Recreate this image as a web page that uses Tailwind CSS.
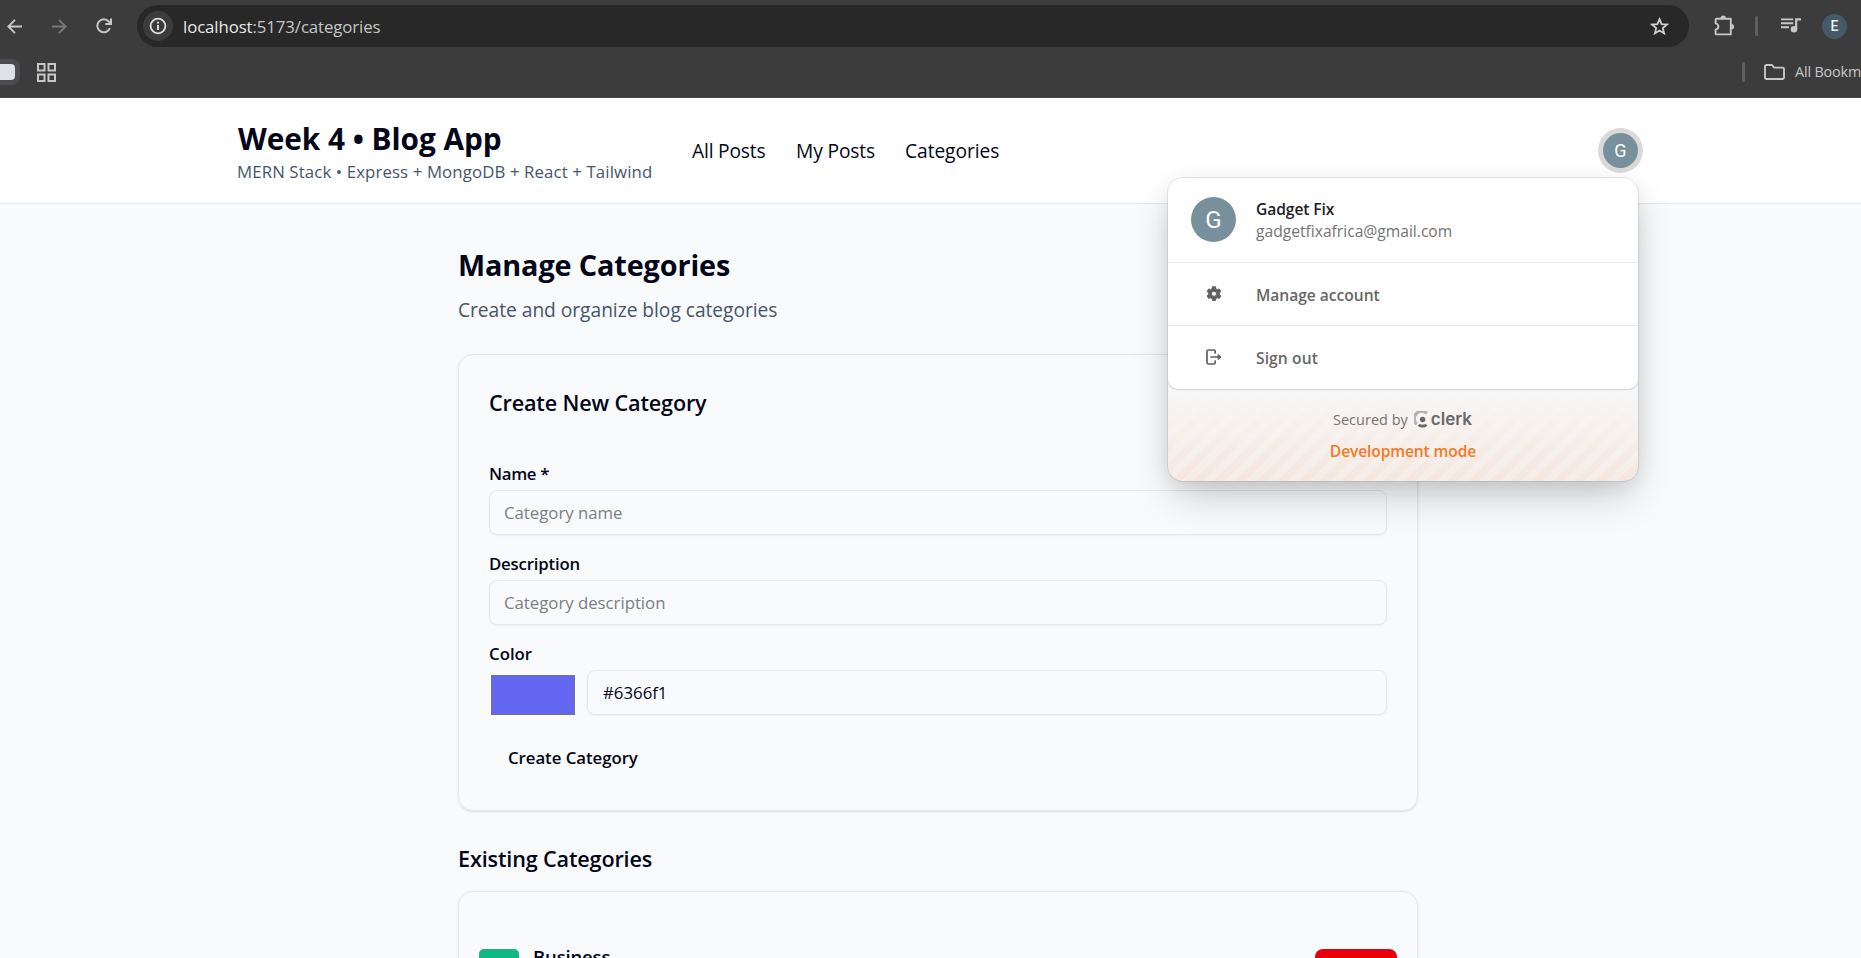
<!DOCTYPE html>
<html lang="en">
<head>
<meta charset="utf-8">
<title>Week 4 • Blog App</title>
<script src="https://cdn.jsdelivr.net/npm/@tailwindcss/browser@4"></script>
</head>
<body class="h-[958px] w-[1861px] overflow-hidden bg-slate-50 font-['Open_Sans','Noto_Sans',sans-serif] text-[#020618]">

<!-- Browser chrome -->
<div class="h-[98px] w-full overflow-hidden border-b border-[#4a4a4a] bg-[#3c3c3c] text-[#c7c7c7]">
  <div class="flex h-[52px] items-center">
    <svg class="ml-[7px] size-[15px] shrink-0" viewBox="0 0 15 15" fill="none" stroke="#c7c7c7" stroke-width="1.9"><path d="M15 7.5H1.5M8 .8 1.3 7.5 8 14.2"/></svg>
    <svg class="ml-[30px] size-[15px] shrink-0" viewBox="0 0 15 15" fill="none" stroke="#7a7a7a" stroke-width="1.9"><path d="M0 7.5h13.5M7 .8l6.7 6.7L7 14.2"/></svg>
    <svg class="ml-[29px] size-4 shrink-0" viewBox="0 0 16 16" fill="none" stroke="#c7c7c7" stroke-width="2"><path d="M13.9 10.2A6.5 6.5 0 1 1 12.8 3.6L14.6 5.6"/><path d="M15 .6v5.5H9.3"/></svg>
    <div class="ml-[25px] flex h-[42px] w-[1552px] shrink-0 items-center rounded-full bg-[#282828] pl-[6px]">
      <div class="flex size-[30px] items-center justify-center rounded-full bg-[#3c3c3c]">
        <svg class="size-[18px]" viewBox="0 0 18 18" fill="none" stroke="#dedede"><circle cx="9" cy="9" r="7.4" stroke-width="1.8"/><path d="M9 8v5" stroke-width="1.9"/><path d="M9 4.7v1.9" stroke-width="1.9"/></svg>
      </div>
      <span class="ml-[10px] text-[16.8px] leading-[25px] tracking-[-0.09px] text-[#c4c7c5]"><span class="text-[#e8e8e8]">localhost</span>:5173/categories</span>
      <svg class="mr-5 ml-auto size-[19px]" viewBox="0 0 19 19" fill="none" stroke="#d0d0d0" stroke-width="1.8"><path d="M9.5 2.2l2.1 5 5.3.4-4.1 3.5 1.3 5.3-4.6-2.9-4.6 2.9 1.3-5.3L2.1 7.6l5.3-.4z"/></svg>
    </div>
    <svg class="mb-[2px] ml-6 h-[21px] w-[22px] shrink-0" viewBox="0 0 22 21" fill="none" stroke="#c7c7c7" stroke-width="1.9"><path d="M3.6 3.700h14.200v15.700H3.600q-1 0-1-1v-3.600q2.800-.6 2.800-3.200T2.600 8.300V4.700q0-1 1-1z" stroke-linejoin="round"/><path d="M7.500 3.200a2.700 2.700 0 0 1 5.400 0zM18.400 9a2.700 2.700 0 0 1 0 5.400z" fill="#c7c7c7" stroke="none"/></svg>
    <div class="ml-[20px] h-5 w-[3px] shrink-0 rounded bg-[#5f5f5f]"></div>
    <svg class="mb-px ml-[23px] h-[15px] w-5 shrink-0" viewBox="0 0 20 15" fill="none" stroke="#c7c7c7" stroke-width="1.9"><path d="M0 1.400h12.300M0 5.300h12.300M0 9.200h8"/><path d="M15.200 11V1.400h4.800" stroke-width="2.200"/><circle cx="13" cy="11.300" r="3.300" fill="#c7c7c7" stroke="none"/></svg>
    <div class="ml-[21px] flex size-[25px] shrink-0 items-center justify-center rounded-full bg-[#455a66] font-[Roboto] text-[14px] leading-none font-medium text-[#eceff1]">E</div>
  </div>
  <div class="flex h-10 items-center">
    <div class="flex h-[26px] w-5 shrink-0 items-center rounded-r-lg bg-[#4b4c50]"><div class="h-4 w-[15px] rounded-r-[4px] bg-[#dfe1e6]"></div></div>
    <svg class="ml-[17px] size-[19px] shrink-0" viewBox="0 0 19 19" fill="none" stroke="#c7c7c7" stroke-width="2"><path d="M1 1h6.500v6.500H1zM11.500 1H18v6.500h-6.500zM1 11.500h6.500V18H1zM11.500 11.500H18V18h-6.500z"/></svg>
    <div class="ml-[1686px] h-5 w-[3px] shrink-0 rounded bg-[#5f5f5f]"></div>
    <svg class="ml-[19px] h-4 w-[21px] shrink-0" viewBox="0 0 21 16" fill="none" stroke="#c7c7c7" stroke-width="1.900" stroke-linejoin="round"><path d="M1 13.500V2.500Q1 1 2.500 1H8l2.200 2.600h8.300q1.500 0 1.500 1.500v8.400q0 1.500-1.500 1.500h-16Q1 15 1 13.500z"/></svg>
    <span class="ml-[10px] shrink-0 text-[14.4px] whitespace-nowrap tracking-[-0.16px]">All Bookmarks</span>
  </div>
</div>

<!-- Site header -->
<header class="h-[106px] border-b border-slate-200 bg-white">
  <div class="relative ml-[238px] flex h-[105px] w-[1400px] items-center">
    <div class="pt-px">
      <h1 class="h-10 text-[29.8px] leading-10 font-bold tracking-[-0.05px]">Week 4 • Blog App</h1>
      <p class="-ml-px text-[16.8px] leading-[25px] tracking-[0.12px] text-[#45556c]">MERN Stack • Express + MongoDB + React + Tailwind</p>
    </div>
    <nav class="absolute left-[454px] flex text-[19.2px] leading-[30px] whitespace-nowrap">
      <a class="w-[104px] tracking-[-0.17px]">All Posts</a>
      <a class="w-[109px] tracking-[-0.13px]">My Posts</a>
      <a class="tracking-[-0.06px]">Categories</a>
    </nav>
    <button class="absolute top-[30px] right-[-5px] flex size-[45px] items-center justify-center rounded-full bg-[#d9d9d9]">
      <span class="flex size-[35px] items-center justify-center rounded-full bg-[#78909c] font-[Roboto] text-[18px] leading-none text-white">G</span>
    </button>

    <!-- Account menu -->
    <div class="absolute top-[80px] right-0 z-10 h-[303px] w-[470px] overflow-hidden rounded-[15px] bg-[#f7f7f7] shadow-[0_0_0_1px_rgba(0,0,0,0.08),0_19px_44px_-6px_rgba(0,0,0,0.2),0_6px_19px_0_rgba(0,0,0,0.08)]">
      <div class="relative z-10 h-[211px] rounded-b-[10px] bg-white shadow-[0_0_0_1px_rgba(0,0,0,0.06),0_1px_2px_0_rgba(0,0,0,0.1)]">
        <div class="flex h-[85px] items-start border-b border-[#ebebeb] pt-[19px] pl-[23px]">
          <div class="flex size-[45px] items-center justify-center rounded-full bg-[#78909c] font-[Roboto] text-[24px] leading-none text-white">G</div>
          <div class="ml-5 pt-[1px] text-[15.6px] leading-[22px]">
            <p class="font-semibold tracking-[-0.08px] text-[#212126]">Gadget Fix</p>
            <p class="tracking-[0.01px] text-[#747474]">gadgetfixafrica@gmail.com</p>
          </div>
        </div>
        <div class="flex h-[63px] items-center border-b border-[#ebebeb] text-[15.6px] font-semibold tracking-[-0.03px] text-[#676767]">
          <svg class="ml-[38px] size-4" viewBox="0 0 16 16" fill="#606060"><path fill-rule="evenodd" d="M6.600.5h2.800l.4 2 1.300.75 1.950-.65 1.400 2.400-1.500 1.400v1.300l1.500 1.400-1.400 2.400-1.950-.65-1.300.75-.4 2H6.600l-.4-2-1.300-.75-1.950.65-1.400-2.400 1.500-1.400V6.400L1.550 5l1.400-2.400 1.950.65L6.200 2.500zM8 4.700a2.400 2.400 0 1 0 0 4.800 2.400 2.400 0 0 0 0-4.800z" transform="translate(-.5 .2) scale(1.060)" stroke="#606060" stroke-width=".9" stroke-linejoin="round"/></svg>
          <span class="ml-[34px] pt-[3px]">Manage account</span>
        </div>
        <div class="flex h-[63px] items-center text-[15.6px] font-semibold tracking-[0.1px] text-[#676767]">
          <svg class="mb-[2px] ml-[38px] size-4" viewBox="0 0 16 16" fill="none" stroke="#606060" stroke-width="1.700" stroke-linecap="round" stroke-linejoin="round"><path d="M9.200 4V2.600Q9.200 1 7.600 1H2.600Q1 1 1 2.600v10.800Q1 15 2.600 15h5q1.600 0 1.600-1.600V12"/><path d="M5 8h9"/><path d="M12.300 5.700 15 8l-2.700 2.300z" fill="#606060" stroke-width="1"/></svg>
          <span class="ml-[34px] pt-[2px]">Sign out</span>
        </div>
      </div>
      <div class="relative flex h-[92px] flex-col items-center pt-[18px]">
        <div class="absolute inset-0 bg-[repeating-linear-gradient(-45deg,rgba(243,107,22,0.07),rgba(243,107,22,0.07)_7.5px,rgba(243,107,22,0.11)_7.5px,rgba(243,107,22,0.11)_15px)] [mask-image:linear-gradient(transparent,black)]"></div>
        <div class="relative flex h-[25px] items-center">
          <span class="-ml-px text-[14.4px] leading-[25px] font-medium tracking-[0.06px] text-[#747474]">Secured by</span>
          <svg class="ml-[6px] h-[17px] w-[15px]" viewBox="0 0 15 17"><path d="M12.900 2.300A7 7 0 0 0 2.600 13.200" fill="none" stroke="#b3b3b5" stroke-width="3.200"/><circle cx="8.600" cy="8.500" r="2.700" fill="#67676c"/><path d="M3.700 14.700Q5 13.500 5.600 12.900q3 1.500 6 0l1.900 1.800q-4.900 3.800-9.800 0z" fill="#67676c"/></svg>
          <span class="ml-[2px] font-[Inter] text-[17px] leading-none font-semibold text-[#67676c]">clerk</span>
        </div>
        <p class="relative mt-[7px] text-[15.6px] leading-[25px] font-semibold tracking-[-0.13px] text-[#f77825]">Development mode</p>
      </div>
    </div>
  </div>
</header>

<!-- Categories page -->
<main class="ml-[458px] w-[960px] pt-[41px]">
  <h2 class="h-10 text-[28.8px] leading-10 font-bold tracking-[-0.12px]">Manage Categories</h2>
  <p class="mt-[10px] text-[19.2px] leading-[30px] tracking-[-0.03px] text-[#45556c]">Create and organize blog categories</p>

  <section class="mt-[29px] h-[457px] rounded-[15px] border border-slate-200 p-[30px] shadow-[0_1px_3px_0_rgba(0,0,0,0.1),0_1px_2px_-1px_rgba(0,0,0,0.1)]">
    <h3 class="text-[21.6px] leading-[35px] font-semibold tracking-[-0.15px]">Create New Category</h3>
    <form class="mt-[41px] flex flex-col gap-4">
      <div>
        <label class="block text-[16.8px] leading-[25px] font-semibold tracking-[-0.35px]">Name *</label>
        <input class="mt-1 block h-[45px] w-[898px] rounded-[8px] border border-slate-200 px-[14px] text-[16.8px] tracking-[-0.02px] shadow-[0_1px_2px_0_rgba(0,0,0,0.05)] placeholder:text-[#7c7f83]" placeholder="Category name">
      </div>
      <div>
        <label class="block text-[16.8px] leading-[25px] font-semibold tracking-[-0.19px]">Description</label>
        <input class="mt-1 block h-[45px] w-[898px] rounded-[8px] border border-slate-200 px-[14px] text-[16.8px] tracking-[-0.02px] shadow-[0_1px_2px_0_rgba(0,0,0,0.05)] placeholder:text-[#7c7f83]" placeholder="Category description">
      </div>
      <div>
        <label class="block text-[16.8px] leading-[25px] font-semibold">Color</label>
        <div class="mt-1 flex">
          <div class="mt-[5px] ml-[2px] h-10 w-[84px] border border-[#767676] bg-[#6366f1]"></div>
          <input class="ml-3 h-[45px] w-[800px] rounded-[8px] border border-slate-200 px-[15px] text-[16.8px] shadow-[0_1px_2px_0_rgba(0,0,0,0.05)]" value="#6366f1">
        </div>
      </div>
      <button type="button" class="mt-1 h-[45px] self-start px-[19px] text-[16.8px] leading-[25px] font-semibold tracking-[-0.04px]">Create Category</button>
    </form>
  </section>

  <h3 class="mt-[30px] text-[21.6px] leading-[35px] font-semibold tracking-[-0.15px]">Existing Categories</h3>
  <section class="mt-[15px] h-[160px] rounded-[15px] border border-slate-200 px-5 pt-[57px] shadow-[0_1px_3px_0_rgba(0,0,0,0.1),0_1px_2px_-1px_rgba(0,0,0,0.1)]">
    <div class="flex items-start">
      <div class="size-10 rounded-[5px] bg-[#10b981]"></div>
      <span class="-mt-[7px] ml-[14px] text-[18.500px] leading-[30px] font-semibold tracking-[-0.15px]">Business</span>
      <div class="ml-auto h-10 w-[82px] rounded-[8px] bg-[#e7000b]"></div>
    </div>
  </section>
</main>
</body>
</html>
